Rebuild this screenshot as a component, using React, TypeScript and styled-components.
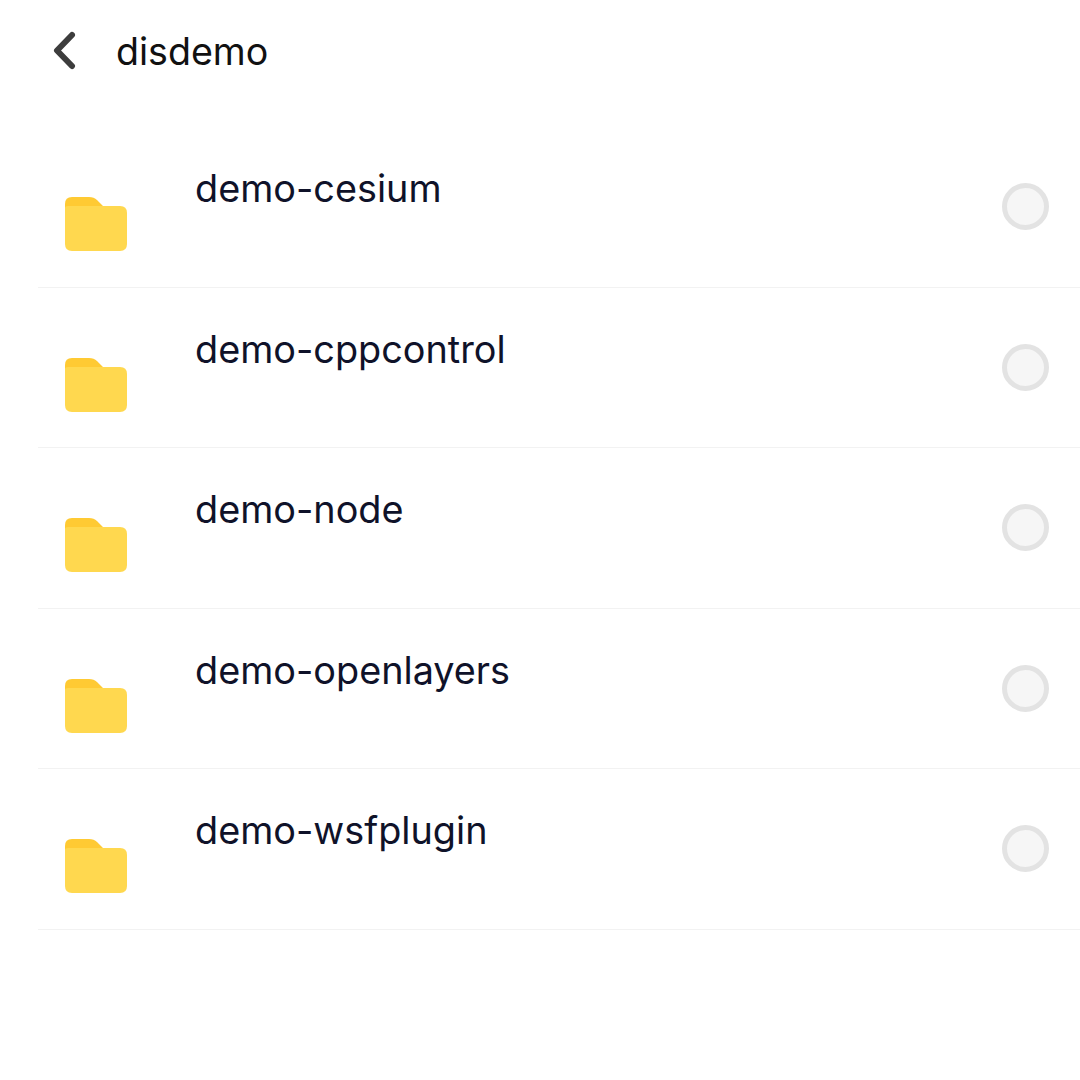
import styled, { createGlobalStyle } from 'styled-components';

const folders = ['demo-cesium', 'demo-cppcontrol', 'demo-node', 'demo-openlayers', 'demo-wsfplugin'];

const GlobalStyle = createGlobalStyle`
  html, body {
    margin: 0;
    padding: 0;
    background: #fff;
  }
  body {
    font-family: Inter, "Noto Sans", "Liberation Sans", sans-serif;
  }
`;

const App = () => (
  <Page>
    <GlobalStyle />
    <Header>
      <BackButton>
        <svg width="28" height="40" viewBox="0 0 28 40" fill="none">
          <path d="M21 4 L6 19.5 L21 35" stroke="#3d3d3d" strokeWidth="6" strokeLinecap="round" strokeLinejoin="round" />
        </svg>
      </BackButton>
      <HeaderTitle>disdemo</HeaderTitle>
    </Header>
    <List>
      {folders.map((name) => (
        <Row key={name}>
          <FolderSlot>
            <svg width="62" height="54" viewBox="0 0 62 54" fill="none">
              <path d="M0 7 Q0 0 7 0 H24 Q29 0 32 3 L38 9 H10 V20 H0 Z" fill="#ffca33" />
              <path d="M0 11 Q0 9 3 9 H55 Q62 9 62 16 V47 Q62 54 55 54 H7 Q0 54 0 47 Z" fill="#ffd84f" />
            </svg>
          </FolderSlot>
          <Name>{name}</Name>
          <Radio />
        </Row>
      ))}
    </List>
  </Page>
);

const Page = styled.div`
  width: 1080px;
  height: 1080px;
  background: #fff;
  overflow: hidden;
`;

const Header = styled.div`
  display: flex;
  align-items: center;
  height: 102px;
  padding-left: 51px;
`;

const BackButton = styled.div`
  display: flex;
  width: 65px;
`;

const HeaderTitle = styled.div`
  font-size: 37.6px;
  color: #111;
`;

const List = styled.div`
  margin: 25px 0 0 38px;
`;

const Row = styled.div`
  display: grid;
  grid-template-columns: 157px 1fr 47px;
  height: 160.5px;
  box-sizing: border-box;
  padding-right: 31px;
  border-bottom: 1px solid #f2f2f2;
`;

const FolderSlot = styled.div`
  padding: 70px 0 0 27px;
`;

const Name = styled.div`
  padding-top: 34px;
  font-size: 37.8px;
  line-height: 54px;
  color: #0f1229;
`;

const Radio = styled.div`
  width: 47px;
  height: 47px;
  margin-top: 56px;
  box-sizing: border-box;
  border-radius: 50%;
  border: 5px solid #e3e3e3;
  background: #f6f6f6;
`;

export default App;
